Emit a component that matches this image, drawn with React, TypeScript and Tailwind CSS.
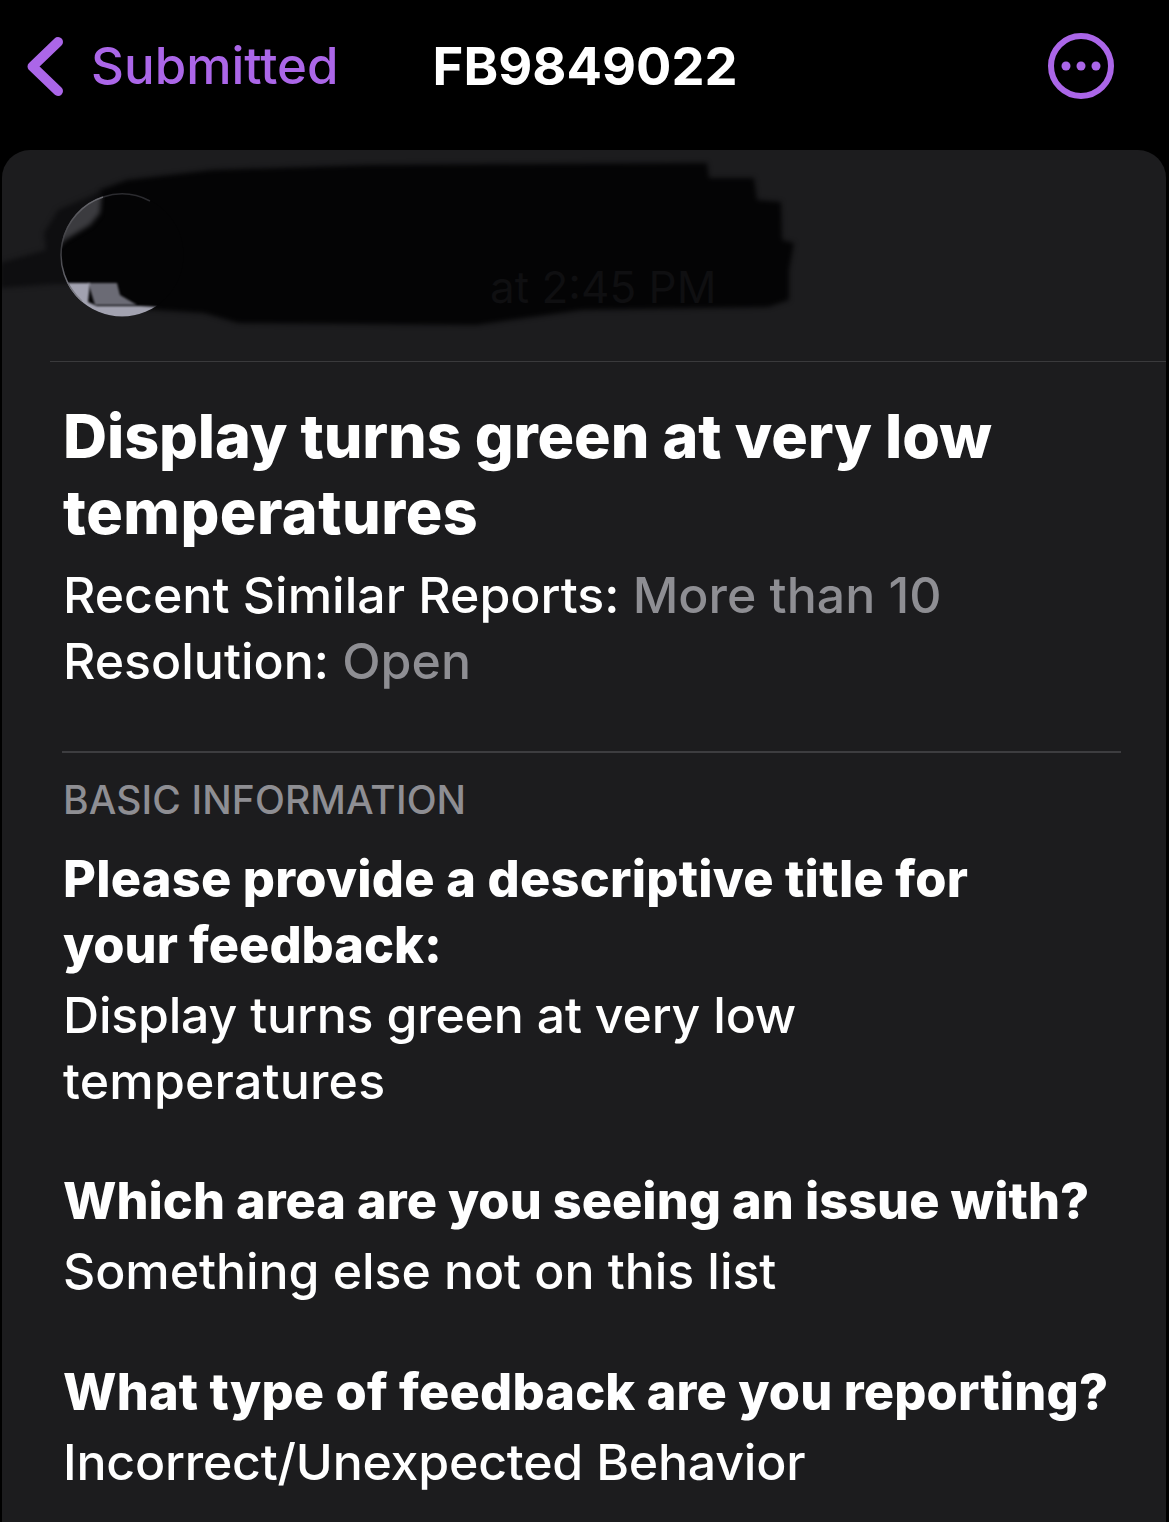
const font = { fontFamily: '"Inter", "Liberation Sans", sans-serif' }

const Scribble = () => (
    <svg viewBox="2 150 830 211" className="absolute left-0 top-0 h-[211px] w-[830px]">
        <defs>
            <filter id="soft" x="-5%" y="-5%" width="110%" height="110%" colorInterpolationFilters="sRGB">
                <feGaussianBlur stdDeviation="2.5" />
            </filter>
            <filter id="tiny" x="-5%" y="-5%" width="110%" height="110%" colorInterpolationFilters="sRGB">
                <feGaussianBlur stdDeviation="1" />
            </filter>
            <clipPath id="avatar">
                <circle cx="122" cy="255" r="61.5" />
            </clipPath>
            <linearGradient id="rim" x1="0" y1="0" x2="0" y2="1">
                <stop offset="0" stopColor="#6a6a70" />
                <stop offset="0.5" stopColor="#37373b" />
                <stop offset="1" stopColor="#8a8a94" />
            </linearGradient>
        </defs>
        <path fill="#0e0e10" filter="url(#soft)" d="M0 263 L46 250 L44 233 L58 210 L100 192 L140 250 L110 284 L53 284 L0 288 Z" />
        <path fill="#040405" filter="url(#soft)" d="M100 190 L127 180 L212 170 L370 165 L707 163 L709 178 L754 178 L757 200 L781 202 L782 240 L794 243 L789 270 L789 300 L768 307 L582 310 L476 325 L238 323 L204 313 L143 309 L116 295 L100 230 Z" />
        <text x="490" y="303" fontSize="44" fill="#0f0f11">at 2:45 PM</text>
        <g clipPath="url(#avatar)">
            <rect x="60" y="193" width="124" height="124" fill="#040405" />
            <path fill="#3b3b3f" filter="url(#soft)" d="M60 190 L102 190 L100 213 L90 225 L65 240 L55 250 Z" />
            <path fill="#6b6b75" filter="url(#tiny)" d="M88 283 L117 283 L120 295 L137 305 L95 305 Z" />
            <path fill="#a2a2b0" filter="url(#tiny)" d="M60 283 L90 283 L88 302 L97 306 L140 306 L158 307 L150 322 L80 322 Z" />
        </g>
        <path d="M82 301 A61 61 0 0 1 103 197" fill="none" stroke="url(#rim)" strokeWidth="1.5" />
        <path d="M103 197 A61 61 0 0 1 150 201" fill="none" stroke="#2b2b2f" strokeWidth="1.5" />
    </svg>
)

const Qa = ({ q, a }: { q: React.ReactNode; a: React.ReactNode }) => (
    <div className="whitespace-nowrap text-[50px] leading-[66px]">
        <p className="text-[50.5px] font-extrabold">{q}</p>
        <p className="mt-[4px] font-medium tracking-[-0.2px]">{a}</p>
    </div>
)

export default function App() {
    return (
        <div style={font} className="h-[1522px] w-[1169px] overflow-hidden bg-black text-white">
            <div className="relative flex h-[150px] items-start pl-[27px] pt-[33px]">
                <svg width="40" height="67" viewBox="0 0 40 67" fill="none">
                    <path d="M31 9 L5.5 33.5 L31 58" stroke="#ab66e8" strokeWidth="10" strokeLinecap="round" strokeLinejoin="round" />
                </svg>
                <span className="ml-[24px] text-[51px] font-medium leading-[66px] text-[#ab66e8]">Submitted</span>
                <span className="ml-[94px] text-[52.5px] font-bold leading-[66px]">FB9849022</span>
                <svg width="68" height="68" viewBox="0 0 68 68" className="absolute left-[1047px] top-[32px]">
                    <circle cx="34" cy="34" r="30" fill="none" stroke="#ab66e8" strokeWidth="6" />
                    <circle cx="19" cy="34" r="4.5" fill="#ab66e8" />
                    <circle cx="34" cy="34" r="4.5" fill="#ab66e8" />
                    <circle cx="49" cy="34" r="4.5" fill="#ab66e8" />
                </svg>
            </div>
            <div className="ml-[2px] mr-[3px] h-[1372px] rounded-t-[28px] bg-[#1c1c1e]">
                <div className="relative h-[211px]">
                    <Scribble />
                </div>
                <div className="ml-[48px] h-px bg-[#3a3a3c]" />
                <div className="px-[61px] pt-[36px]">
                    <h1 className="text-[61px] font-extrabold leading-[76px] tracking-[-0.1px]">
                        Display turns green at very low<br /><span className="tracking-[0.5px]">temperatures</span>
                    </h1>
                    <div className="mt-[12px] text-[50px] font-medium leading-[66px]">
                        <p>Recent Similar Reports: <span className="text-[#8e8e93]">More than 10</span></p>
                        <p>Resolution: <span className="text-[#8e8e93]">Open</span></p>
                    </div>
                    <div className="-ml-px mt-[57px] h-[2px] w-[1059px] bg-[#3d3d40]" />
                    <p className="mt-[24px] text-[39px] font-medium leading-[46px] tracking-[0.1px] text-[#8e8e93]">BASIC INFORMATION</p>
                    <div className="mt-[23px] flex flex-col gap-[54px]">
                        <Qa
                            q={<><span className="tracking-[0.25px]">Please provide a descriptive title for</span><br />your feedback:</>}
                            a={<>Display turns green at very low<br /><span className="tracking-[0.2px]">temperatures</span></>}
                        />
                        <Qa q="Which area are you seeing an issue with?" a={<span className="tracking-[-0.07px]">Something else not on this list</span>} />
                        <div className="pt-px">
                            <Qa q={<span className="tracking-[0.17px]">What type of feedback are you reporting?</span>} a="Incorrect/Unexpected Behavior" />
                        </div>
                    </div>
                </div>
            </div>
        </div>
    )
}
